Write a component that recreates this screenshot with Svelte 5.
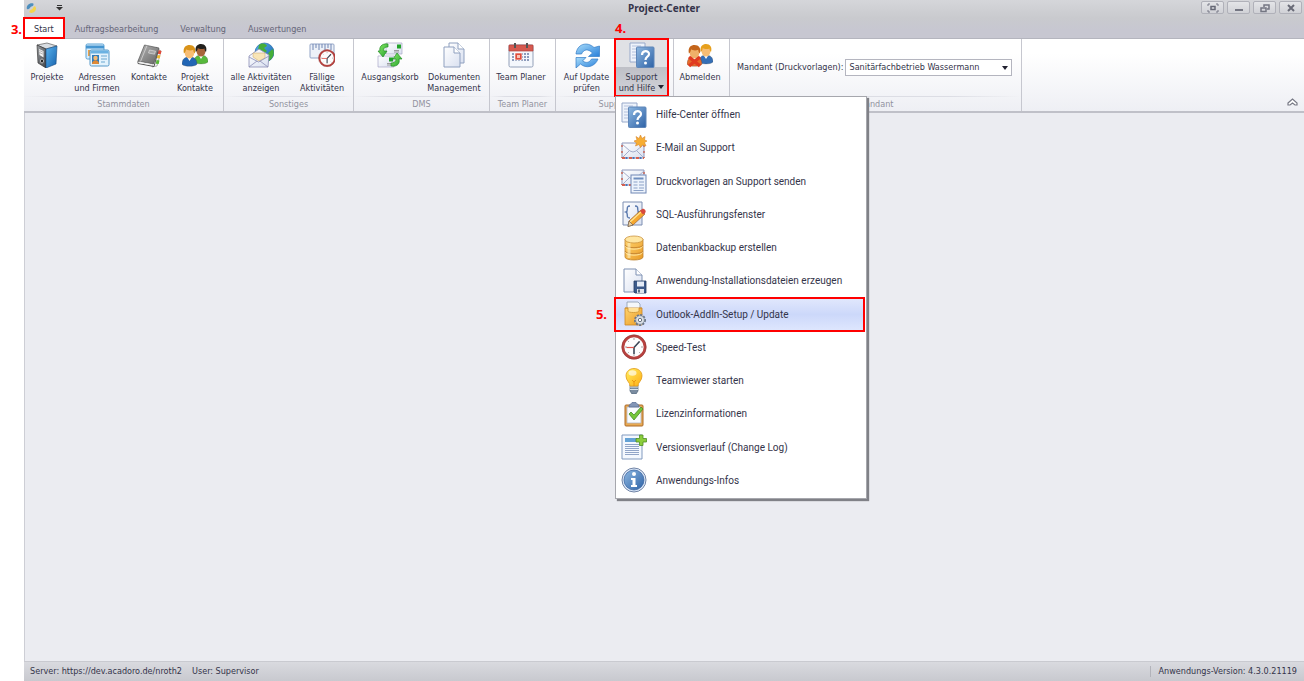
<script lang="ts">
	interface Command {
		icon: string;
		lines: string[];
		width: number;
		menu?: boolean;
	}

	interface Group {
		caption: string;
		commands: Command[];
	}

	const TABS: string[] = ['Start', 'Auftragsbearbeitung', 'Verwaltung', 'Auswertungen'];

	const GROUPS: Group[] = [
		{
			caption: 'Stammdaten',
			commands: [
				{ icon: 'binder', lines: ['Projekte'], width: 42 },
				{ icon: 'cards', lines: ['Adressen', 'und Firmen'], width: 58 },
				{ icon: 'book', lines: ['Kontakte'], width: 46 },
				{ icon: 'people', lines: ['Projekt', 'Kontakte'], width: 46 },
			],
		},
		{
			caption: 'Sonstiges',
			commands: [
				{ icon: 'globe', lines: ['alle Aktivitäten', 'anzeigen'], width: 70 },
				{ icon: 'due', lines: ['Fällige', 'Aktivitäten'], width: 52 },
			],
		},
		{
			caption: 'DMS',
			commands: [
				{ icon: 'outbox', lines: ['Ausgangskorb'], width: 68 },
				{ icon: 'docs', lines: ['Dokumenten', 'Management'], width: 60 },
			],
		},
		{
			caption: 'Team Planer',
			commands: [{ icon: 'calendar', lines: ['Team Planer'], width: 58 }],
		},
		{
			caption: 'Support',
			commands: [
				{ icon: 'refresh', lines: ['Auf Update', 'prüfen'], width: 57 },
				{ icon: 'help', lines: ['Support', 'und Hilfe'], width: 53, menu: true },
			],
		},
		{
			caption: '',
			commands: [{ icon: 'logout', lines: ['Abmelden'], width: 48 }],
		},
	];

	const MENU = [
		{ icon: 'help', label: 'Hilfe-Center öffnen' },
		{ icon: 'mail', label: 'E-Mail an Support' },
		{ icon: 'mailform', label: 'Druckvorlagen an Support senden' },
		{ icon: 'sql', label: 'SQL-Ausführungsfenster' },
		{ icon: 'database', label: 'Datenbankbackup erstellen' },
		{ icon: 'install', label: 'Anwendung-Installationsdateien erzeugen' },
		{ icon: 'addin', label: 'Outlook-AddIn-Setup / Update' },
		{ icon: 'clock', label: 'Speed-Test' },
		{ icon: 'bulb', label: 'Teamviewer starten' },
		{ icon: 'license', label: 'Lizenzinformationen' },
		{ icon: 'changelog', label: 'Versionsverlauf (Change Log)' },
		{ icon: 'info', label: 'Anwendungs-Infos' },
	];

	let activeTab = $state('Start');
	let activeItem = $state('addin');
	let menuOpen = $state(true);
	let client = $state('Sanitärfachbetrieb Wassermann');
</script>

{#snippet clockFace()}
	<circle cx="13" cy="13" r="11" fill="#fdfdfd" stroke="#b8423f" stroke-width="2.6" />
	<circle cx="13" cy="13" r="12.2" fill="none" stroke="#8f3434" stroke-width="0.6" />
	<path d="M13 4v2M13 20v2M4 13h2M20 13h2M6.6 6.6l1.2 1.2M19.4 6.6l-1.2 1.2M6.6 19.4l1.2-1.2M19.4 19.4l-1.2-1.2" stroke="#888" stroke-width="0.8" />
	<path d="M18.5 7.5 13 13.500V20" fill="none" stroke="#3c4656" stroke-width="1.6" />
	<path d="M5.5 13.5H13" stroke="#e0564e" stroke-width="1.2" />
{/snippet}

{#snippet envelope()}
	<path d="M1 6h22v15H1z" fill="url(#paper)" stroke="#8d97ba" />
	<path d="M1 7l8 7q3 2 6 0l8-7M1 21l7-7M23 21l-7-7" fill="none" stroke="#a5aecb" />
	<path d="M1 21h22" stroke="#d8604f" stroke-width="2" stroke-dasharray="3 4" />
	<path d="M4.5 21H23" stroke="#4a75b8" stroke-width="2" stroke-dasharray="2 5" />
	<path d="M1 8v13M23 8v13" stroke="#c8604f" stroke-width="1.4" stroke-dasharray="2 4" />
{/snippet}

{#snippet person(skin: string, hair: string, shirt: string)}
	<path d="M0 18c0-5 3-7 7-7s7 2 7 7c-2 2.5-12 2.5-14 0z" fill={shirt} stroke="#333" stroke-opacity=".4" stroke-width=".6" />
	<path d="M4.5 11l2.500 4 2.500-4z" fill="#fff" />
	<ellipse cx="7" cy="7" rx="4.5" ry="5.5" fill={skin} />
	<path d="M1.8 8C.5 2 4 0 7 0c4 0 6.500 3 5 8-1-1-1.500-2-1.500-3.500C8 5.500 5 5 3.800 4 3.500 6 3 7 1.800 8z" fill={hair} />
{/snippet}

{#snippet icon(name: string)}
	<svg class="icon" viewBox="0 0 26 26" aria-hidden="true">
		{#if name === 'binder'}
			<path d="M3 3l10-2 10 3-11 3z" fill="#d8dde2" stroke="#444" stroke-width=".6" />
			<path d="M3 3l9 4v19l-8-5z" fill="url(#dark)" stroke="#222" stroke-width=".6" />
			<path d="M12 7l11-3-1 18-10 4z" fill="url(#blue)" stroke="#174c83" stroke-width=".6" />
			<path d="M5 7l4.5 2v6.500L5.500 13z" fill="#f3f3f3" />
			<path d="M5.5 8.500l3.500 1.700M5.500 10.500l3.500 1.700" stroke="#888" stroke-width=".6" />
			<ellipse cx="8" cy="19" rx="1.5" ry="2" fill="#111" stroke="#ddd" stroke-width=".8" />
		{:else if name === 'cards'}
			<rect x="2" y="2" width="18" height="15" rx="1.5" fill="#d9edfb" stroke="#5ca3d5" />
			<path d="M2 3.5h18v3H2z" fill="#4595d0" />
			<path d="M4 8h4v6H4z" fill="#e8a04a" />
			<rect x="6" y="8" width="19" height="16" rx="1.5" fill="#e2f2fc" stroke="#5598c8" />
			<path d="M6.5 8.500h18v3h-18z" fill="#6bb2e2" />
			<path d="M8 13h7v9H8z" fill="#2f7cbc" />
			<circle cx="11.5" cy="16" r="2.200" fill="#f3ba75" />
			<path d="M8 22c0-5 7-5 7 0z" fill="#e08a36" />
			<path d="M17 14h6M17 17h6M17 20h4" stroke="#6ba7d0" />
		{:else if name === 'book'}
			<path d="M20 5l5 4-4 15-5 1z" fill="#f2f2f2" stroke="#888" stroke-width=".6" />
			<path d="M22.500 8l3 1-.8 3.300-3-.5z" fill="#e34937" />
			<path d="M21.500 13l3 .5-.8 3-3-.5z" fill="#efba2d" />
			<path d="M20.500 18l3 .5-.8 3.500-3-.3z" fill="#5ab737" />
			<path d="M8.500 3l14.500 3-5.500 16L2 19z" fill="url(#cover)" stroke="#555" stroke-width=".7" />
			<path d="M2 19v2.500l16 3 4-15" fill="none" stroke="#555" stroke-width="1" />
			<path d="M2.500 20.500l15 2.500" stroke="#eee" stroke-width="1" />
			<path d="M11 3.500L4.500 19.500" stroke="#d5d5d5" stroke-width=".8" />
			<path d="M13.500 8l6 1.200-1 3-6-1.200z" fill="#a5a5a5" stroke="#e5e5e5" stroke-width=".6" />
		{:else if name === 'people'}
			<g transform="translate(12 2)">{@render person('#a8643a', '#22201d', '#57b83c')}</g>
			<g transform="translate(0 3) scale(1.07)">{@render person('#f7bd74', '#d99319', '#2266b5')}</g>
		{:else if name === 'logout'}
			<g transform="translate(12 2)">{@render person('#f7bd74', '#e7a01d', '#356fb6')}</g>
			<g transform="translate(0 3) scale(1.07)">{@render person('#efb069', '#c4651b', '#e66b2c')}</g>
			<path d="M2 15l11 9M13 15L2 24" stroke="#e03a20" stroke-width="3.500" />
		{:else if name === 'globe'}
			<circle cx="16.5" cy="10.5" r="9.5" fill="url(#blue)" stroke="#1d5da0" stroke-width=".6" />
			<path d="M11 3c4-3 7-1 8 1l-3 2 3 3-4 4-5-5zM21 10l4-3c2 5 0 9-4 12l-2-5z" fill="#45ae39" />
			<path d="M1 14l10-7 10 6-1 12H1z" fill="url(#paper)" stroke="#8c8eb5" stroke-width=".8" />
			<path d="M5 11h12v5l-6 3-6-4z" fill="#f8e5b7" stroke="#c8a768" stroke-width=".5" />
			<path d="M1 15l9.500 5L21 14M1 25l8-6M20 25l-8-6" fill="none" stroke="#8c8eb5" stroke-width=".8" />
		{:else if name === 'due'}
			<rect x="1" y="2" width="24" height="14" rx="1" fill="#edf1f8" stroke="#93a4c6" />
			<path d="M4 2v6M7 2v4M10 2v6M13 2v4M16 2v6M19 2v4M22 2v6" stroke="#6f85b3" />
			<g transform="translate(9 7) scale(.7)">{@render clockFace()}</g>
		{:else if name === 'outbox'}
			<path d="M9 1h16v11H9z" fill="url(#paper)" stroke="#a9a7c7" stroke-width=".7" />
			<path d="M1 14h16v11H1z" fill="url(#paper)" stroke="#a9a7c7" stroke-width=".7" />
			<path d="M20 2.500h4v4h-4zM12 15.500h4v4h-4z" fill="#23a32a" />
			<path d="M17 8.500h5M17 10h5M10 21.500h5M10 23h5" stroke="#888" stroke-width=".8" />
			<path d="M11 2C4 1 2 6 3 9H1l5 6 4-6H7c-1-3 1-4 4-4z" fill="url(#green)" stroke="#238b27" stroke-width=".7" />
			<path d="M14 24c7 1 9-3 8-7h3l-5-6-4 6h3c0 3-2 4-5 4z" fill="url(#green)" stroke="#238b27" stroke-width=".7" />
		{:else if name === 'docs'}
			<path d="M8 1h9l6 6v14H8z" fill="url(#paper)" stroke="#8fa0bf" />
			<path d="M17 1v6h6" fill="#fff" stroke="#8fa0bf" />
			<path d="M3 5h10l6 6v14H3z" fill="url(#paper)" stroke="#8fa0bf" />
			<path d="M13 5v6h6" fill="#fff" stroke="#8fa0bf" />
		{:else if name === 'calendar'}
			<rect x="1" y="3" width="24" height="22" rx="1.5" fill="#f4f7fc" stroke="#93a0b8" />
			<path d="M1 3h24v6H1z" fill="#d65a50" stroke="#af413b" stroke-width=".7" />
			<path d="M7 1v5M19 1v5" stroke="#555" stroke-width="2" />
			<path d="M4 12h18M4 15h18M4 18h18" stroke="#8d9bba" stroke-width="2" stroke-dasharray="2 1" />
			<rect x="7" y="11" width="7" height="7" fill="#df4d3d" stroke="#fff" stroke-width=".6" />
			<rect x="9" y="13" width="3" height="3" fill="#f8c3b7" />
		{:else if name === 'refresh'}
			<path d="M2 12C3 2 13-1 20 5.500L25.500 4v10.500H14.500l4-3.500C14 6.500 10 7 7.500 12z" fill="url(#sky)" stroke="#347bc5" stroke-width=".7" />
			<path d="M24 17c-3 8-12 10-17.500 5L2 26V15.500h10L8.500 19c4 2.500 7 1.500 9-2z" fill="url(#sky)" stroke="#347bc5" stroke-width=".7" />
		{:else if name === 'help'}
			<path d="M1 1h15v19H1z" fill="#eef3fb" stroke="#98a9ca" />
			<path d="M3 4h9M3 7h8M3 10h4M3 13h4M3 16h4" stroke="#b4c1dc" />
			<rect x="7.5" y="5" width="17.5" height="20.5" rx="1" fill="url(#help)" stroke="#5f86b8" />
			<path d="M13 13c0-5 7-5 7-1 0 3-3.500 2.500-3.500 6" fill="none" stroke="#fff" stroke-width="2.2" />
			<circle cx="16.5" cy="21" r="1.5" fill="#fff" />
		{:else if name === 'mail'}
			<g transform="translate(0 2)">{@render envelope()}</g>
			<path d="M19.5 0l1.500 3.500 3-2-.5 3.500L26 6l-2.500 1.500L25 11l-3.500-1-2 2.500-1.500-3-3.500 1.500L15.500 8 13 6l3-1-1-3.500 3 2z" fill="#f7ad32" stroke="#d9862c" stroke-width=".6" />
		{:else if name === 'mailform'}
			<g transform="translate(0 -4)">{@render envelope()}</g>
			<rect x="10" y="7" width="15" height="18" fill="#edf3fc" stroke="#7188b5" />
			<path d="M12.5 10.500h10" stroke="#6f8ebf" stroke-width="2" />
			<path d="M12.5 14h4M12.500 17h4M12.500 20h4M18 14h5M18 17h5M18 20h5M12.500 22.500h10" stroke="#8ba1c7" />
		{:else if name === 'sql'}
			<path d="M2 1h19v23H2z" fill="url(#paper)" stroke="#7d8eb1" />
			<path d="M9 5c-5 0-1 5-4 6 3 1-1 6 4 6M14 5c5 0 1 5 4 6-3 1 1 6-4 6" fill="none" stroke="#5a79ae" stroke-width="1.4" />
			<path d="M8 20L20 9l4 4-12 11-5 1.500z" fill="#f5a72f" stroke="#9b6131" stroke-width=".7" />
			<path d="M9 21l12-11" stroke="#ffe38d" stroke-width="1.3" />
			<path d="M19 10l2-2c2-1 5 2 3 4l-2 1.500z" fill="#d8493e" />
			<path d="M8 20l4 4-5 1.500z" fill="#eed0a0" stroke="#555" stroke-width=".6" />
		{:else if name === 'database'}
			<path d="M4 4v18c0 4 18 4 18 0V4z" fill="url(#gold)" stroke="#bd812d" stroke-width=".8" />
			<ellipse cx="13" cy="4.5" rx="9" ry="3.5" fill="#ffe6a1" stroke="#cb9440" stroke-width=".8" />
			<path d="M4 10c1 3.500 17 3.500 18 0M4 16c1 3.500 17 3.500 18 0" fill="none" stroke="#c98a34" stroke-width="1" />
			<path d="M4.500 11.500c1 3.500 16 3.500 17 0M4.500 17.500c1 3.500 16 3.500 17 0" fill="none" stroke="#ffe7a4" />
			<path d="M8 8v15" stroke="#fff2c4" stroke-width="3" opacity=".6" />
		{:else if name === 'install'}
			<path d="M3 1h12l6 6v17H3z" fill="url(#paper)" stroke="#7e91b3" />
			<path d="M15 1v6h6" fill="#fff" stroke="#7e91b3" />
			<path d="M13 13h12v12H14l-1-1z" fill="#3c5a8a" stroke="#253e66" stroke-width=".8" />
			<path d="M16 13.500h7v5h-7z" fill="#e5ecf7" />
			<path d="M16 21h7v4h-7z" fill="#dfe5ec" />
			<path d="M18 21.500v3" stroke="#294164" stroke-width="1.5" />
		{:else if name === 'addin'}
			<path d="M6 1h11l2 2v7H6z" fill="#f4f7fa" stroke="#8c9aad" stroke-width=".8" />
			<path d="M4 7h17v17H4z" fill="url(#gold)" stroke="#ca8527" stroke-width=".8" />
			<path d="M4 7h3v3c0 2 11 2 11 0V7h3" fill="#ffe29a" stroke="#cb902f" stroke-width=".8" />
			<circle cx="19" cy="19" r="5" fill="#cfd6df" stroke="#687486" stroke-width="2" stroke-dasharray="2 1.3" />
			<circle cx="19" cy="19" r="4.3" fill="#dbe0e7" stroke="#768292" stroke-width=".7" />
			<circle cx="19" cy="19" r="1.7" fill="#fff" stroke="#68717e" />
		{:else if name === 'clock'}
			{@render clockFace()}
		{:else if name === 'bulb'}
			<path d="M9 17h8v6l-2 3h-4l-2-3z" fill="#7a8ca0" stroke="#50657a" stroke-width=".7" />
			<path d="M9 19h8M9 21.500h8" stroke="#dce4e9" />
			<path d="M9 18c0-4-4-5-4-10 0-10 16-10 16 0 0 5-4 6-4 10z" fill="url(#bulb)" stroke="#e19c1d" stroke-width=".8" />
			<ellipse cx="11.5" cy="5" rx="4" ry="2.800" fill="#fff" opacity=".65" />
			<path d="M11 12l2 2 2-2M13 14v4" fill="none" stroke="#e88c0b" stroke-width=".8" />
		{:else if name === 'license'}
			<rect x="4" y="4" width="18" height="21" rx="1" fill="#e8aa53" stroke="#ad6b29" />
			<path d="M6 6h14v16H6z" fill="#f8fbff" stroke="#a9b0be" stroke-width=".7" />
			<path d="M8 5c0-2 3-2 3-3.500h4C15 3 18 3 18 5v1H8z" fill="#8295b6" stroke="#536990" stroke-width=".7" />
			<path d="M8 13l2-2 3 3 7-8 2 2-9 11z" fill="#74c63b" stroke="#458c24" stroke-width=".8" />
		{:else if name === 'changelog'}
			<path d="M1 1h20v24H1z" fill="#f4f8fe" stroke="#819abf" />
			<path d="M4 4h12v4H4z" fill="#64a2d5" />
			<path d="M4 10.500h14M4 12.500h14M4 14.500h14M4 16.500h14M4 18.500h14M4 20.500h14" stroke="#91a5c8" />
			<path d="M18.500 1h3.500v3.500h3.500V8H22v3.500h-3.500V8H15V4.500h3.500z" fill="#8bcd3c" stroke="#4e8e25" stroke-width=".8" />
		{:else if name === 'info'}
			<circle cx="13" cy="13" r="12" fill="#dce8f8" stroke="#7184a6" />
			<circle cx="13" cy="13" r="10" fill="url(#help)" stroke="#325f9d" stroke-width=".7" />
			<circle cx="13" cy="7" r="2" fill="#fff" />
			<path d="M10 11h4.500v7H16v2h-6v-2h1.500v-5H10z" fill="#fff" />
		{/if}
	</svg>
{/snippet}

{#snippet gradient(id: string, from: string, to: string)}
	<linearGradient {id} x1="0" y1="0" x2="1" y2="1">
		<stop offset="0" stop-color={from} />
		<stop offset="1" stop-color={to} />
	</linearGradient>
{/snippet}

<svg class="defs" aria-hidden="true">
	<defs>
		{@render gradient('paper', '#ffffff', '#d9e0f0')}
		{@render gradient('dark', '#9a9da1', '#404449')}
		{@render gradient('cover', '#b4b4b4', '#666666')}
		{@render gradient('blue', '#58b2ed', '#1762ad')}
		{@render gradient('sky', '#a9ddfa', '#287fda')}
		{@render gradient('green', '#8ded68', '#23a12d')}
		{@render gradient('help', '#8eb8e2', '#2e62a6')}
		{@render gradient('gold', '#ffd36f', '#e99b26')}
		{@render gradient('bulb', '#fff05f', '#ffad13')}
	</defs>
</svg>

<div class="page">
	<div class="window">
		<header class="titlebar">
			<div class="quick">
				<svg class="logo" viewBox="0 0 12 12" aria-hidden="true">
					<path d="M1 7C0 3 4 0 8 1c1 3-2 3-3 4S4 8 1 7z" fill="#4d8fbe" />
					<path d="M10 4c3 4-2 9-6 7-1-3 2-3 3-4s1-3 3-3z" fill="#f4d54b" />
				</svg>
				<button class="customize" aria-label="Schnellzugriff anpassen">
					<svg viewBox="0 0 7 6" aria-hidden="true"><path d="M1 .5h5" stroke="#333" /><path d="M0 2h7L3.500 5.500z" fill="#333" /></svg>
				</button>
			</div>
			<h1>Project-Center</h1>
			<div class="controls">
				<button aria-label="Vollbild">
					<svg viewBox="0 0 12 10" aria-hidden="true"><path d="M1 3V1h2M9 1h2v2M11 7v2H9M3 9H1V7" fill="none" stroke="#777986" /><rect x="4" y="3.500" width="4" height="3" fill="none" stroke="#666875" stroke-width="1.5" /></svg>
				</button>
				<button aria-label="Minimieren">
					<svg viewBox="0 0 12 10" aria-hidden="true"><path d="M2 7h8" stroke="#747682" stroke-width="2" /></svg>
				</button>
				<button aria-label="Wiederherstellen">
					<svg viewBox="0 0 12 10" aria-hidden="true"><path d="M5 4V2h5v4H8" fill="none" stroke="#747682" stroke-width="1.5" /><rect x="2" y="5" width="5" height="3.500" fill="none" stroke="#747682" stroke-width="1.5" /></svg>
				</button>
				<button aria-label="Schließen">
					<svg viewBox="0 0 12 10" aria-hidden="true"><path d="M3 2l6 6M9 2L3 8" stroke="#696b77" stroke-width="2" /></svg>
				</button>
			</div>
		</header>

		<nav class="tabs">
			{#each TABS as tab}
				<button class="tab" class:active={tab === activeTab} onclick={() => (activeTab = tab)}>{tab}</button>
			{/each}
			<span class="step step-tab">3.</span>
		</nav>

		<div class="ribbon">
			{#each GROUPS as group}
				<section class="group">
					<div class="commands">
						{#each group.commands as command}
							<div class="slot" style:width="{command.width}px">
								<button
									class="command"
									class:open={command.menu}
									onclick={() => command.menu && (menuOpen = !menuOpen)}
								>
									{@render icon(command.icon)}
									<span class="label">
										{#each command.lines as line, i}
											<span class="line">
												{line}{#if command.menu && i === 1}<span class="caret"></span>{/if}
											</span>
										{/each}
									</span>
								</button>
								{#if command.menu}
									<span class="step step-command">4.</span>
									{#if menuOpen}
										<div class="menu" role="menu">
											{#each MENU as item}
												<button
													class="item"
													class:selected={item.icon === activeItem}
													role="menuitem"
													onclick={() => (activeItem = item.icon)}
												>
													{@render icon(item.icon)}
													<span>{item.label}</span>
													{#if item.icon === activeItem}
														<span class="step step-item">5.</span>
													{/if}
												</button>
											{/each}
										</div>
									{/if}
								{/if}
							</div>
						{/each}
					</div>
					<div class="caption">{group.caption}</div>
				</section>
			{/each}
			<section class="group">
				<div class="commands client">
					<label for="client">Mandant (Druckvorlagen):</label>
					<div class="select">
						<select id="client" bind:value={client}>
							<option>Sanitärfachbetrieb Wassermann</option>
						</select>
						<span class="caret"></span>
					</div>
				</div>
				<div class="caption">Mandant</div>
			</section>
			<button class="collapse" aria-label="Menüband minimieren">
				<svg viewBox="0 0 11 9" aria-hidden="true"><path d="M1 5l4.500-4L10 5v2H8L5.500 5 3 7H1z" fill="#fff" stroke="#777985" stroke-width="1.2" /></svg>
			</button>
		</div>

		<main class="workspace"></main>

		<footer class="status">
			<span>Server: https://dev.acadoro.de/nroth2</span>
			<span>User: Supervisor</span>
			<span class="version">Anwendungs-Version: 4.3.0.21119</span>
		</footer>
	</div>
</div>

<style>
	:global(body) {
		margin: 0;
		background: #fff;
	}

	.page {
		display: flex;
		box-sizing: border-box;
		min-height: 100vh;
		padding-left: 24px;
		font-family: 'DejaVu Sans Condensed', Roboto, sans-serif;
		font-size: 9px;
		line-height: 11px;
		color: #34344a;
	}

	button,
	select {
		margin: 0;
		padding: 0;
		border: 0;
		background: none;
		font: inherit;
		color: inherit;
	}

	.defs {
		position: absolute;
		width: 0;
		height: 0;
	}

	.window {
		flex: 1;
		display: flex;
		flex-direction: column;
		min-width: 0;
		background: linear-gradient(#d5d6da, #c9cace 18px, #c7c7d1 30px);
	}

	.titlebar {
		display: grid;
		grid-template-columns: 1fr auto 1fr;
		align-items: center;
		height: 18px;
	}

	.quick {
		display: flex;
		align-items: center;
		gap: 19px;
		padding: 0 0 2px 2px;
	}

	.logo {
		width: 11px;
		height: 12px;
	}

	.customize {
		display: flex;
		width: 7px;
	}

	h1 {
		margin: 0;
		padding-bottom: 2px;
		font-family: 'Noto Sans', sans-serif;
		font-size: 10px;
		font-weight: 700;
	}

	.controls {
		display: flex;
		justify-content: flex-end;
		gap: 3px;
		padding: 0 2px 3px 0;
	}

	.controls button {
		display: flex;
		align-items: center;
		justify-content: center;
		box-sizing: border-box;
		width: 23px;
		height: 13px;
		border: 1px solid #b0b1b9;
		border-radius: 2px;
		background: linear-gradient(#e4e5e8, #d0d1d6);
	}

	.controls svg {
		width: 12px;
		height: 10px;
	}

	.tabs {
		position: relative;
		display: flex;
		height: 20px;
	}

	.tab {
		padding: 2px 11px 0;
		color: #666678;
	}

	.tab.active {
		padding: 2px 10px 0;
		background: #fff;
		color: #34344a;
		outline: 2px solid #f00;
		outline-offset: -1px;
		z-index: 1;
	}

	.step {
		position: absolute;
		font-family: 'Noto Sans', sans-serif;
		font-size: 13px;
		font-weight: 700;
		line-height: 16px;
		color: #f00;
	}

	.step-tab {
		right: 100%;
		top: 3px;
		margin-right: 2px;
	}

	.step-command {
		left: 0;
		top: -19px;
	}

	.step-item {
		right: 100%;
		margin-right: 8px;
	}

	.ribbon {
		display: flex;
		height: 72px;
		border-top: 1px solid #b4b5be;
		border-bottom: 2px solid #bfc0c8;
		background: linear-gradient(#fff 20%, #eeeff4);
	}

	.group {
		display: flex;
		flex-direction: column;
		border-right: 1px solid #c6c7cf;
	}

	.commands {
		flex: 1;
		display: flex;
		padding: 0 5px 0 2px;
	}

	.slot {
		position: relative;
		display: flex;
	}

	.command {
		flex: 1;
		display: flex;
		flex-direction: column;
		align-items: center;
		padding-top: 3px;
		white-space: nowrap;
	}

	.icon {
		flex: none;
		width: 26px;
		height: 26px;
	}

	.label {
		align-self: stretch;
		display: flex;
		flex-direction: column;
		align-items: center;
		padding-top: 4px;
	}

	.command.open {
		background: linear-gradient(#e0e1e5 50%, #bfc0c7 50%, #d3d4da);
		outline: 2px solid #f00;
		outline-offset: -1px;
	}

	.caret {
		display: inline-block;
		margin-left: 3px;
		border: 3px solid transparent;
		border-top: 4px solid #222230;
		border-bottom: 0;
		vertical-align: 2px;
	}

	.caption {
		height: 14px;
		border-top: 1px solid;
		border-image: linear-gradient(90deg, transparent, #dcdde4 25%, #dcdde4 75%, transparent) 1;
		line-height: 15px;
		text-align: center;
		color: #9293a0;
	}

	.menu {
		position: absolute;
		left: 0;
		top: 100%;
		z-index: 2;
		display: grid;
		grid-auto-rows: 1fr;
		box-sizing: border-box;
		width: 252px;
		height: 403px;
		padding: 1px 0;
		border: 1px solid #a6a7ad;
		background: #fff;
		box-shadow: 2px 2px 1px #808187;
		font-family: Roboto, sans-serif;
		font-size: 10px;
	}

	.item {
		position: relative;
		display: flex;
		align-items: center;
		gap: 9px;
		padding-left: 5px;
		text-align: left;
	}

	.item.selected {
		margin: 0 2px 0 -1px;
		padding-left: 6px;
		background: linear-gradient(#e2e8fd, #ccd8fa 50%, #dfe7fe);
		outline: 2px solid #f00;
		outline-offset: -1px;
	}

	.client {
		align-items: center;
		gap: 2px;
		padding: 0 9px 0 7px;
	}

	.select {
		position: relative;
		display: flex;
		align-items: center;
	}

	.select select {
		appearance: none;
		width: 167px;
		height: 17px;
		padding-left: 3px;
		border: 1px solid #b4b5bf;
		background: #fff;
	}

	.select .caret {
		position: absolute;
		right: 4px;
		pointer-events: none;
	}

	.collapse {
		align-self: flex-end;
		margin-left: auto;
		padding: 0 6px 4px 0;
	}

	.collapse svg {
		display: block;
		width: 11px;
		height: 9px;
	}

	.workspace {
		flex: 1;
		border-left: 1px solid #cdced5;
		background: #ebecf1;
	}

	.status {
		display: flex;
		align-items: center;
		gap: 10px;
		height: 19px;
		padding: 0 7px 0 6px;
		border-top: 1px solid #c9cad0;
		background: linear-gradient(#d9dadf, #c8c9cf);
	}

	.version {
		margin-left: auto;
		padding-left: 8px;
		border-left: 1px solid #b2b3ba;
	}
</style>
